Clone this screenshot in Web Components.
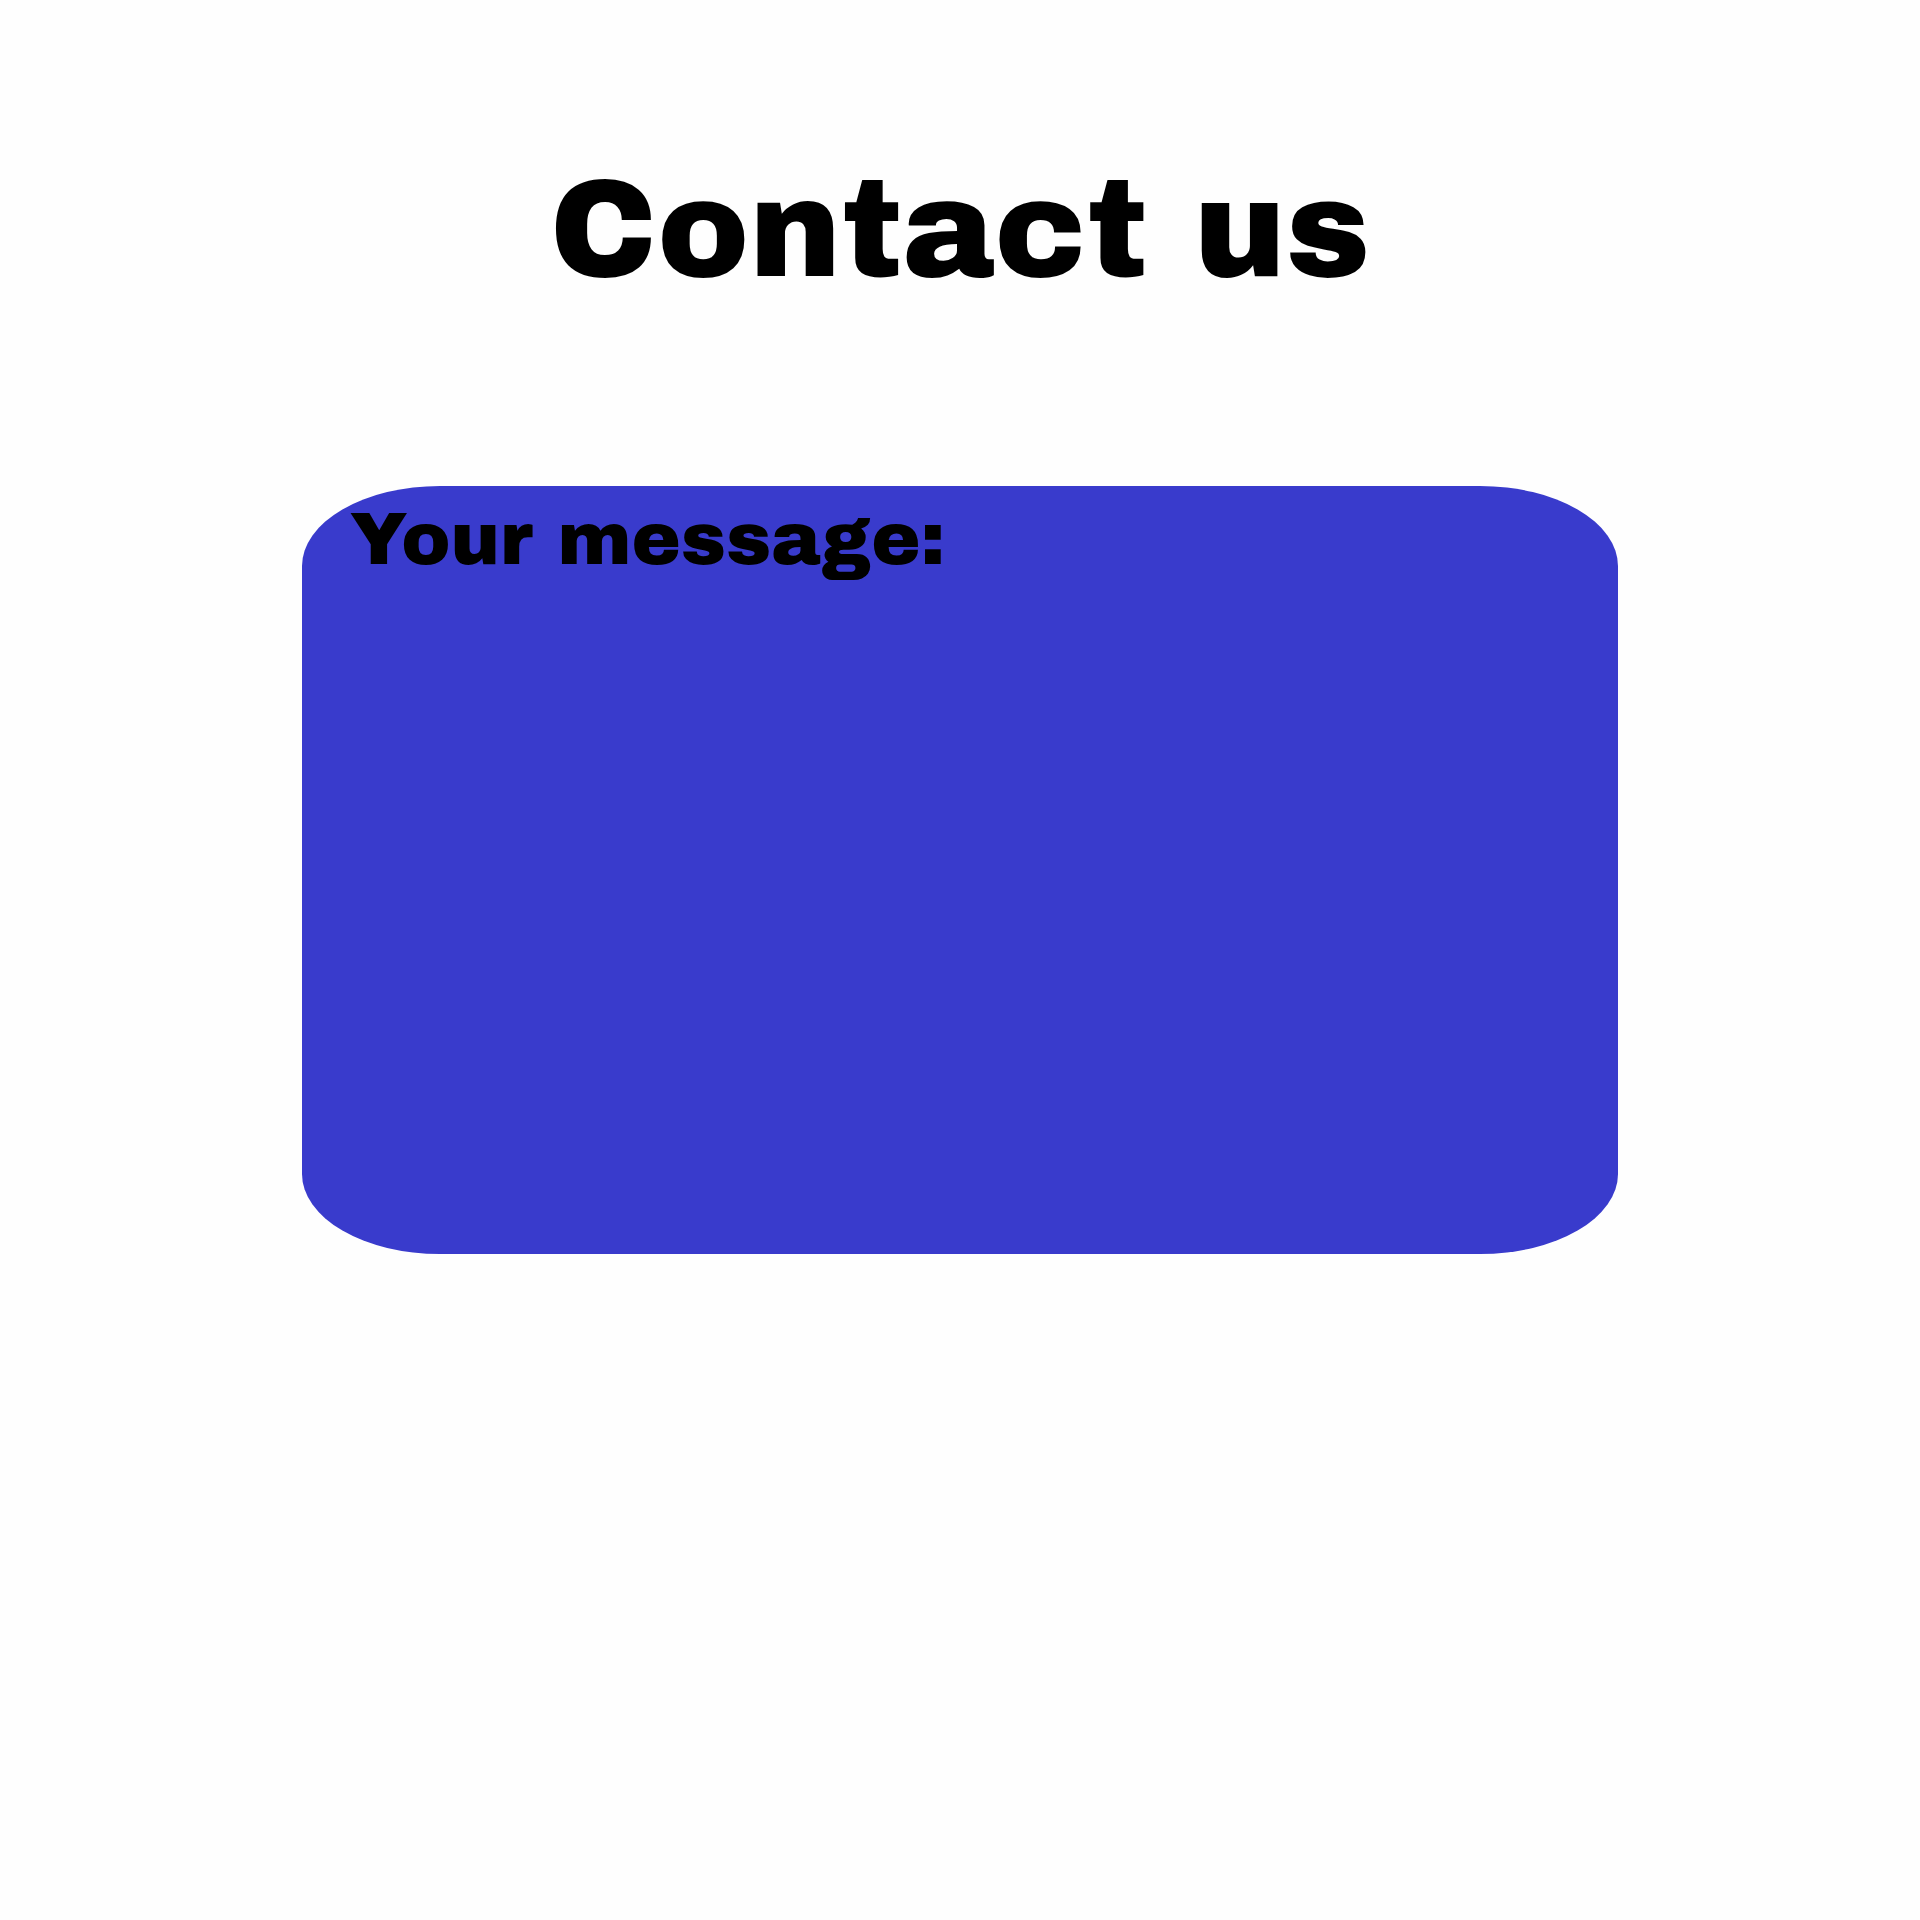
<!DOCTYPE html>
<html lang="en">
<head>
<meta charset="utf-8">
<meta name="viewport" content="width=device-width, initial-scale=1">
<title>Contact us</title>
<style>
  body { margin: 0; background: #fefefe; color: #000; font-family: "Archivo Black", Inter, "Liberation Sans", sans-serif; font-weight: 400; }
</style>
</head>
<body>
<contact-page>
  <span slot="title">Contact us</span>
  <message-card>Your message:</message-card>
</contact-page>
<script>
class ContactPage extends HTMLElement {
  constructor() {
    super();
    this.attachShadow({ mode: "open" }).innerHTML = `
      <style>
        :host { display: block; min-height: 100vh; box-sizing: border-box; padding: 150px 8% 0; }
        main { display: flex; flex-direction: column; align-items: center; gap: 176px; }
        h1 { margin: 0; font-size: 138px; line-height: 160px; font-weight: 400; text-align: center; }
        ::slotted(message-card) { width: 81.6%; }
      </style>
      <main>
        <h1><slot name="title"></slot></h1>
        <slot></slot>
      </main>`;
  }
}
class MessageCard extends HTMLElement {
  constructor() {
    super();
    this.attachShadow({ mode: "open" }).innerHTML = `
      <style>
        :host { display: block; }
        form { display: flex; flex-direction: column; box-sizing: border-box; aspect-ratio: 12 / 7; padding: 14px 48px 48px; border-radius: 138px / 80px; background: #393bcc; }
        label { font-size: 74px; line-height: 80px; }
        textarea { flex: 1; min-height: 0; padding: 16px 0; border: 0; outline: 0; resize: none; background: transparent; color: inherit; font: 400 32px/40px "Liberation Sans", sans-serif; }
      </style>
      <form>
        <label for="message"><slot></slot></label>
        <textarea id="message" name="message"></textarea>
      </form>`;
  }
}
customElements.define("contact-page", ContactPage);
customElements.define("message-card", MessageCard);
</script>
</body>
</html>
